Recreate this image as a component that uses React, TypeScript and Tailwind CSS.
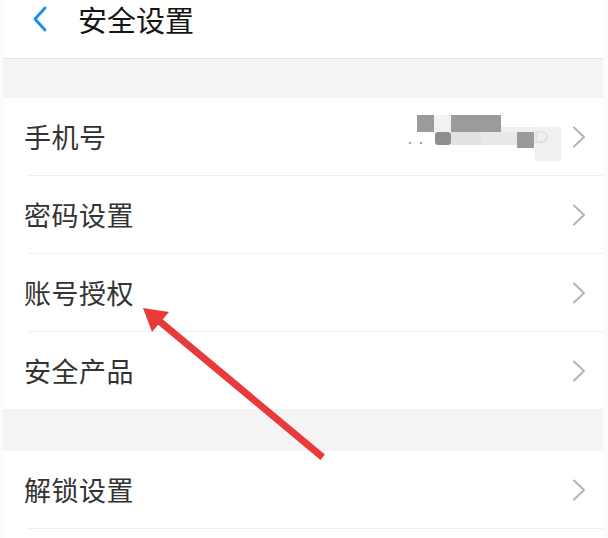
import React from 'react';

const rows = ['手机号', '密码设置', '账号授权', '安全产品'];

const Chevron = () => (
  <svg width="14" height="22" viewBox="0 0 14 22" className="shrink-0">
    <path d="M2 1.5 L12 11 L2 20.5" fill="none" stroke="#b4b4b4" strokeWidth="2" strokeLinecap="round" strokeLinejoin="round" />
  </svg>
);

// blurred phone number
const Mosaic = () => (
  <svg width="156" height="50" viewBox="0 0 156 50" className="shrink-0">
    <rect x="28" y="3" width="17" height="17" fill="#f2f2f2" />
    <rect x="45" y="15" width="110" height="18" fill="#efefef" />
    <rect x="129" y="15" width="26" height="34" fill="#f0f0f0" />
    <rect x="11" y="3" width="17" height="17" fill="#9b9b9b" />
    <rect x="45" y="3" width="50" height="17" fill="#9b9b9b" />
    <rect x="29" y="20" width="16" height="13" rx="3" fill="#8e8e8e" />
    <rect x="45" y="20" width="30" height="13" fill="#e2e2e2" />
    <rect x="75" y="20" width="36" height="13" fill="#e8e8e8" />
    <rect x="111" y="20" width="17" height="16" fill="#9a9a9a" />
    <path d="M130 20 h6 a5 5 0 0 1 0 10 h-6 z" fill="none" stroke="#dcdcdc" strokeWidth="1.5" />
    <circle cx="4" cy="31" r="1.3" fill="#a8a8a8" />
    <circle cx="15" cy="31" r="1.3" fill="#a8a8a8" />
  </svg>
);

const Row = ({ label, value }: { label: string; value?: React.ReactNode }) => (
  <div className="h-[77px] flex items-center pl-[21px] pr-[17px]">
    <span className="text-[27px] leading-none text-[#333333] tracking-[0.5px]">{label}</span>
    <div className="ml-auto flex items-center gap-[10px]">
      {value}
      <Chevron />
    </div>
  </div>
);

const Divider = () => <div className="ml-[25px] h-px bg-[#efefef]" />;

export default function App() {
  return (
    <div
      className="relative w-[608px] h-[538px] bg-white overflow-hidden flex"
      style={{ fontFamily: '"Noto Sans CJK SC", "Noto Sans", sans-serif' }}
    >
      {/* left edge of the page behind */}
      <div className="w-[3px] shrink-0 bg-[#fbfbfb]" />

      <div className="w-[600px] shrink-0 flex flex-col">
        {/* Header */}
        <div className="h-[58px] flex items-start bg-white">
          <svg width="20" height="28" viewBox="0 0 20 28" className="ml-[27px] mt-[5px]">
            <path d="M15 3 L5 14 L15 25" fill="none" stroke="#1e8ef0" strokeWidth="3" strokeLinecap="round" strokeLinejoin="round" />
          </svg>
          <span className="ml-[28px] mt-[1px] text-[29px] leading-[36px] text-[#151515]">安全设置</span>
        </div>

        <div className="h-[40px] bg-[#f4f4f4] border-t border-[#e4e4e4]" />

        <Row label={rows[0]} value={<Mosaic />} />
        <Divider />
        <Row label={rows[1]} />
        <Divider />
        <Row label={rows[2]} />
        <Divider />
        <Row label={rows[3]} />

        <div className="h-[42px] bg-[#f4f4f4]" />

        <Row label="解锁设置" />
        <Divider />
      </div>

      {/* right edge of the page behind */}
      <div className="w-[5px] shrink-0 bg-[#fbfbfb]" />

      {/* red annotation arrow */}
      <svg className="absolute inset-0 pointer-events-none" width="608" height="538" viewBox="0 0 608 538">
        <line x1="320" y1="455" x2="158" y2="320" stroke="#e83a3b" strokeWidth="7" strokeLinecap="square" />
        <polygon points="143,308 152,332 169,312" fill="#e83a3b" />
      </svg>
    </div>
  );
}
